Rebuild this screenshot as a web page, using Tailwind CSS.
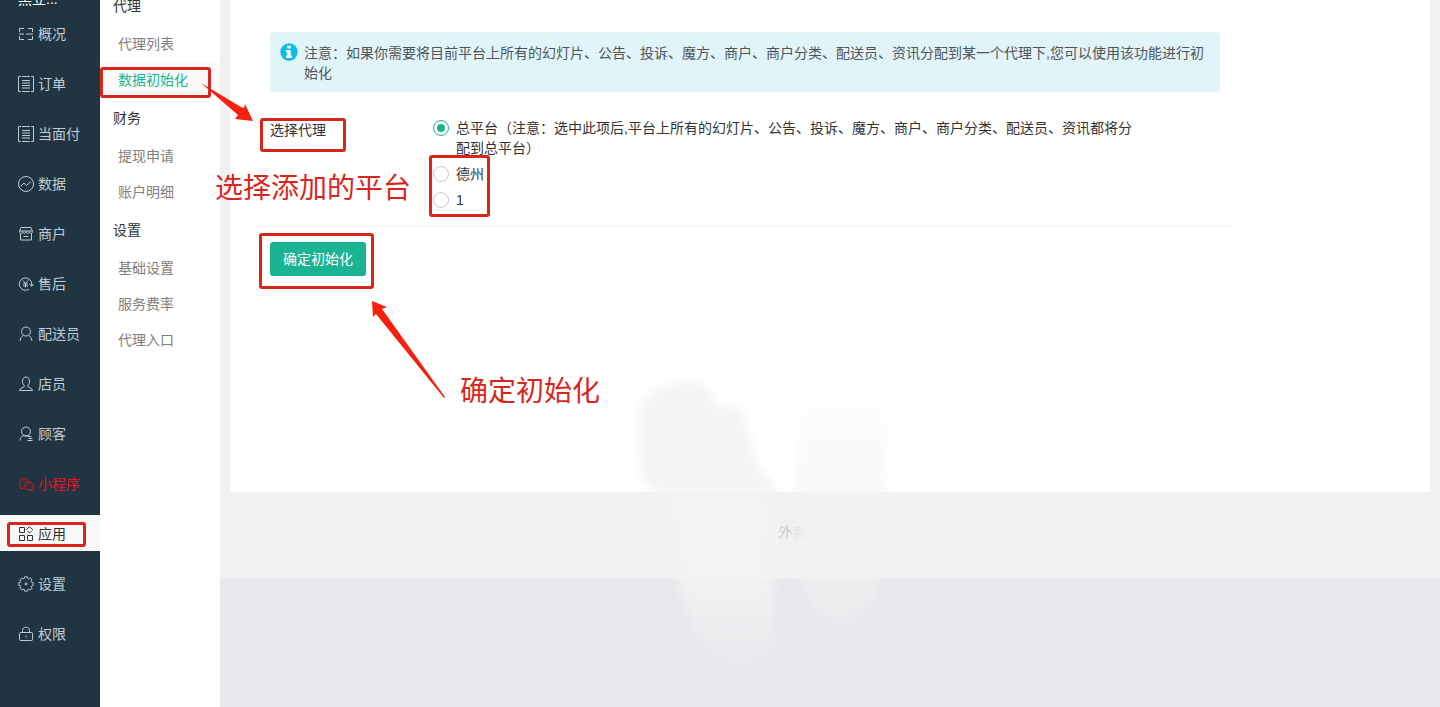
<!DOCTYPE html>
<html lang="zh-CN">

<head>
    <meta charset="UTF-8" />
    <meta name="viewport" content="width=device-width, initial-scale=1.0" />
    <title>数据初始化</title>
    <script src="https://cdn.jsdelivr.net/npm/@tailwindcss/browser@4"></script>
</head>

<body class="relative bg-[#e7e8ec] font-['Liberation_Sans','Noto_Sans_CJK_SC',sans-serif] text-sm text-[#333]">
    <div class="flex min-h-screen overflow-hidden">
        <!-- Main navigation -->
        <aside class="w-[100px] shrink-0 bg-[#203541] text-[#c3ccd2]">
            <div class="-mt-3.5 h-[29px] pl-[18px] leading-[26px] text-white">黑立...</div>
            <nav class="flex flex-col gap-3.5">
                <a href="#" class="flex h-9 items-center gap-1 pt-px pl-[18px]">
                    <svg class="size-4" viewBox="0 0 16 16" fill="none" stroke="currentColor"><path d="M1.500 6V2.500H6M10 2.500h4.500V6M1.500 10v3.500H6M10 13.500h4.500V10M1 8h5M8 8h7" /></svg>
                    概况
                </a>
                <a href="#" class="flex h-9 items-center gap-1 pt-px pl-[18px]">
                    <svg class="size-4" viewBox="0 0 16 16" fill="none" stroke="currentColor"><path d="M3 .5H.5v15H3M13 .5h2.500v15H13M4 .5h8M4 15.500h8M4 4.500h8M4 7h8M4 9.500h8M4 12h8" /></svg>
                    订单
                </a>
                <a href="#" class="flex h-9 items-center gap-1 pt-px pl-[18px]">
                    <svg class="size-4" viewBox="0 0 16 16" fill="none" stroke="currentColor"><path d="M3 .5H.5v15H3M13 .5h2.500v15H13M4 .5h8M4 15.500h8M4 4.500h8M4 7h8M4 9.500h8M4 12h8" /></svg>
                    当面付
                </a>
                <a href="#" class="flex h-9 items-center gap-1 pt-px pl-[18px]">
                    <svg class="size-4" viewBox="0 0 16 16" fill="none" stroke="currentColor"><circle cx="8" cy="8" r="7.500" /><path d="M2.500 10.500l3.500-3.500 2.500 2.500 4.500-4" /></svg>
                    数据
                </a>
                <a href="#" class="flex h-9 items-center gap-1 pt-px pl-[18px]">
                    <svg class="size-4" viewBox="0 0 16 16" fill="none" stroke="currentColor"><path d="M3 1.500h10l1.500 4c0 2.500-3 2.500-3.250 0 0 2.500-3.250 2.500-3.250 0 0 2.500-3.250 2.500-3.250 0 0 2.500-3.250 2.500-3.250 0zM1.500 5h13M2.500 7.500v6.500h11v-6.500M5.500 10.500h5" /></svg>
                    商户
                </a>
                <a href="#" class="flex h-9 items-center gap-1 pt-px pl-[18px]">
                    <svg class="size-4" viewBox="0 0 16 16" fill="none" stroke="currentColor"><path d="M11 13.200A6.200 6.200 0 1 1 13.700 8v2M11.500 8l2.200 2.300L15.700 8M5 4.500l2.500 3 2.500-3M7.500 7.500v4M5 7.800h5M5 9.800h5" /></svg>
                    售后
                </a>
                <a href="#" class="flex h-9 items-center gap-1 pt-px pl-[18px]">
                    <svg class="size-4" viewBox="0 0 16 16" fill="none" stroke="currentColor"><circle cx="8" cy="5.500" r="4.500" /><path d="M5.500 9.500C3.500 10.500 2.500 12 2 15M10.500 9.500c2 1 3 2.500 3.500 5.500" /></svg>
                    配送员
                </a>
                <a href="#" class="flex h-9 items-center gap-1 pt-px pl-[18px]">
                    <svg class="size-4" viewBox="0 0 16 16" fill="none" stroke="currentColor"><path d="M6.500 10C5 8.500 4.500 7 4.500 5c0-5.300 7-5.300 7 0 0 2-.5 3.500-2 5 0 2 5 1.500 5 4.500H1.500c0-3 5-2.500 5-4.500z" /></svg>
                    店员
                </a>
                <a href="#" class="flex h-9 items-center gap-1 pt-px pl-[18px]">
                    <svg class="size-4" viewBox="0 0 16 16" fill="none" stroke="currentColor"><circle cx="8" cy="5.500" r="4.500" /><path d="M5.500 9.500c-2 .8-3.300 2.500-3.500 5M5.500 9.500c2 1 3.500.5 5 0M9.500 10.500h4M10.500 12.500h4M9.500 14.500h5" /></svg>
                    顾客
                </a>
                <a href="#" class="flex h-9 items-center gap-1 pt-px pl-[18px] text-[#f00f1c]">
                    <svg class="size-4" viewBox="0 0 16 16" fill="none" stroke="currentColor"><path d="M6.500 11.500L2.500 13l.3-2.500C-.5 7 2 2.500 6 2.500c2.800 0 4.800 1.800 5 4" /><path d="M10.500 6.500c5 0 6 4.500 3.300 6.500l.2 2-2-1.200c-3.500.7-5.500-1.300-5.500-3.500s2-3.800 4-3.800z" /><path d="M4 5.500h1M7.500 5.500h1M8.500 9.500h1M11.500 9.500h1" /></svg>
                    小程序
                </a>
                <a href="#" class="flex h-9 items-center gap-1 bg-[#f8f8f8] pt-px pl-[18px] text-[#333]">
                    <svg class="size-4" viewBox="0 0 16 16" fill="none" stroke="currentColor"><path d="M1.500 1.500h5v5h-5zM1.500 9.500h5v5h-5zM9.500 9.500h5v5h-5zM8 4L11.500.7 15 4M9.500 5l2 2 2-2" /></svg>
                    应用
                </a>
                <a href="#" class="flex h-9 items-center gap-1 pt-px pl-[18px]">
                    <svg class="size-4" viewBox="0 0 16 16" fill="none" stroke="currentColor" stroke-linejoin="round"><path d="M6.200 2.500L6.700.8h2.600l.5 1.700.8.3 1.600-.8L14 3.800l-.8 1.600.3.8 1.700.5v2.600l-1.700.5-.3.8.8 1.600-1.800 1.800-1.600-.8-.8.3-.5 1.700H6.700l-.5-1.700-.8-.3-1.600.8L2 12.200l.8-1.600-.3-.8-1.700-.5V6.700l1.700-.5.3-.8L2 3.800 3.800 2l1.600.8z" /><circle cx="8" cy="8" r="1" /></svg>
                    设置
                </a>
                <a href="#" class="flex h-9 items-center gap-1 pt-px pl-[18px]">
                    <svg class="size-4" viewBox="0 0 16 16" fill="none" stroke="currentColor"><rect x="1.500" y="6.500" width="13" height="8" rx="1" /><path d="M4.500 6.500V4.500c0-4.500 7-4.500 7 0v2M8 9.500v2" /></svg>
                    权限
                </a>
            </nav>
        </aside>

        <!-- Agent sub menu -->
        <nav class="w-[120px] shrink-0 bg-white text-[#808080]">
            <h3 class="-mt-3.5 flex h-10 items-center pl-[13px] text-[#333]">代理</h3>
            <a href="#" class="flex h-9 items-center pl-[18px]">代理列表</a>
            <a href="#" class="flex h-9 items-center bg-[#fafafa] pl-[18px] text-[#1ab394]">数据初始化</a>
            <h3 class="flex h-10 items-center pl-[13px] text-[#333]">财务</h3>
            <a href="#" class="flex h-9 items-center pl-[18px]">提现申请</a>
            <a href="#" class="flex h-9 items-center pl-[18px]">账户明细</a>
            <h3 class="flex h-10 items-center pl-[13px] text-[#333]">设置</h3>
            <a href="#" class="flex h-9 items-center pl-[18px]">基础设置</a>
            <a href="#" class="flex h-9 items-center pl-[18px]">服务费率</a>
            <a href="#" class="flex h-9 items-center pl-[18px]">代理入口</a>
        </nav>

        <div class="min-w-0 flex-1">
            <div class="bg-[#f1f1f1] px-2.5">
                <main class="min-h-[492px] bg-white px-[26px] pt-8">
                    <div class="mx-3.5 flex max-w-[950px] gap-1.5 rounded-sm bg-[#e1f4f9] pt-[11px] pr-3.5 pb-[9px] pl-2.5 leading-5 text-[#4d5559]">
                        <svg class="size-[18px] shrink-0" viewBox="0 0 18 18"><circle cx="9" cy="9" r="8.700" fill="#12bbe6" /><path d="M7.300 2.800h3.400v2.700H7.300zM6 7h4.700v5.500H12V15H6v-2.500h1.300v-3H6z" fill="#fff" /></svg>
                        <p>注意：如果你需要将目前平台上所有的幻灯片、公告、投诉、魔方、商户、商户分类、配送员、资讯分配到某一个代理下,您可以使用该功能进行初始化</p>
                    </div>

                    <form>
                        <fieldset class="flex max-w-[976px] border-b border-[#f3f3f3] px-3.5 pt-[26px] pb-4 leading-5" aria-labelledby="agent-label">
                            <div id="agent-label" class="w-[163px] shrink-0 pt-0.5">选择代理</div>
                            <div class="flex max-w-[706px] flex-col gap-1.5">
                                <label class="flex gap-[7px]">
                                    <input type="radio" name="agent" value="0" checked class="mt-0.5 size-4 shrink-0 appearance-none rounded-full border border-[#c8c8c8] bg-clip-content p-[3px] checked:border-[#1ab394] checked:bg-[#1ab394]" />
                                    <span>总平台（注意：选中此项后,平台上所有的幻灯片、公告、投诉、魔方、商户、商户分类、配送员、资讯都将分配到总平台）</span>
                                </label>
                                <label class="flex gap-[7px]">
                                    <input type="radio" name="agent" value="1" class="mt-0.5 size-4 shrink-0 appearance-none rounded-full border border-[#c8c8c8] bg-clip-content p-[3px] checked:border-[#1ab394] checked:bg-[#1ab394]" />
                                    <span>德州</span>
                                </label>
                                <label class="flex gap-[7px]">
                                    <input type="radio" name="agent" value="2" class="mt-0.5 size-4 shrink-0 appearance-none rounded-full border border-[#c8c8c8] bg-clip-content p-[3px] checked:border-[#1ab394] checked:bg-[#1ab394]" />
                                    <span>1</span>
                                </label>
                            </div>
                        </fieldset>
                        <button type="submit" class="mt-[15px] ml-3.5 h-[34px] rounded-[3px] bg-[#1ab394] px-[13px] text-white">确定初始化</button>
                    </form>
                </main>
                <footer class="flex h-[87px] justify-center pt-[30px] leading-5 text-[#c8c8c8]">
                    <div class="w-[104px]">外<span class="text-[#dedede]">卖</span></div>
                </footer>
            </div>
        </div>
    </div>

    <!-- Soft smudges, arrows and red marks over the page -->
    <div class="pointer-events-none absolute inset-0 overflow-hidden text-[28px] leading-9 text-[#d9261c]">
        <svg class="absolute top-0 left-0" width="1000" height="707" viewBox="0 0 1000 707">
            <defs>
                <filter id="soft" x="-20%" y="-20%" width="140%" height="140%"><feGaussianBlur stdDeviation="5" /></filter>
                <linearGradient id="fade" x1="0" y1="0" x2="0" y2="1">
                    <stop offset="0" stop-color="#f3f3f3" stop-opacity=".8" />
                    <stop offset=".75" stop-color="#f3f3f3" stop-opacity=".8" />
                    <stop offset="1" stop-color="#f0f0f2" stop-opacity=".2" />
                </linearGradient>
                <linearGradient id="rise" x1="0" y1="0" x2="0" y2="1">
                    <stop offset="0" stop-color="#f7f7f7" stop-opacity=".2" />
                    <stop offset=".4" stop-color="#f4f4f4" stop-opacity=".6" />
                    <stop offset=".8" stop-color="#f2f2f2" stop-opacity=".7" />
                    <stop offset="1" stop-color="#f1f1f2" stop-opacity=".4" />
                </linearGradient>
            </defs>
            <g filter="url(#soft)">
                <path d="M638 412q6-22 26-26 24-12 40-2 8 8 14 22 26-6 30 22l10 36 18 24 4 30-6 60-2 70-26 20-34-14-18-24-20-56-16-80-18-14z" fill="url(#fade)" />
                <path d="M800 400q40-20 88 0l-1 80-4 70-10 56-26 16-28-6-18-34-6-90z" fill="url(#rise)" />
            </g>
            <g fill="#f7200f">
                <path d="M201 83L241 107 244 108 245 104 253 121 235 119 238 115z" />
                <path d="M372 301L387 307 382 309 445 397 444 398 376 314 373 317z" />
            </g>
        </svg>
        <div class="absolute top-[67px] left-[100px] h-[31px] w-[111px] rounded-[3px] border-3 border-current"></div>
        <div class="absolute top-[118px] left-[260px] h-[34px] w-[86px] rounded-[3px] border-3 border-current"></div>
        <div class="absolute top-[155px] left-[429px] h-[62px] w-[61px] rounded-[3px] border-3 border-current"></div>
        <div class="absolute top-[233px] left-[259px] h-14 w-[115px] rounded-[3px] border-3 border-current"></div>
        <div class="absolute top-[522px] left-[7px] h-[25px] w-[79px] rounded-[3px] border-3 border-current"></div>
        <p class="absolute top-[171px] left-[215px]">选择添加的平台</p>
        <p class="absolute top-[374px] left-[460px]">确定初始化</p>
    </div>
</body>

</html>
